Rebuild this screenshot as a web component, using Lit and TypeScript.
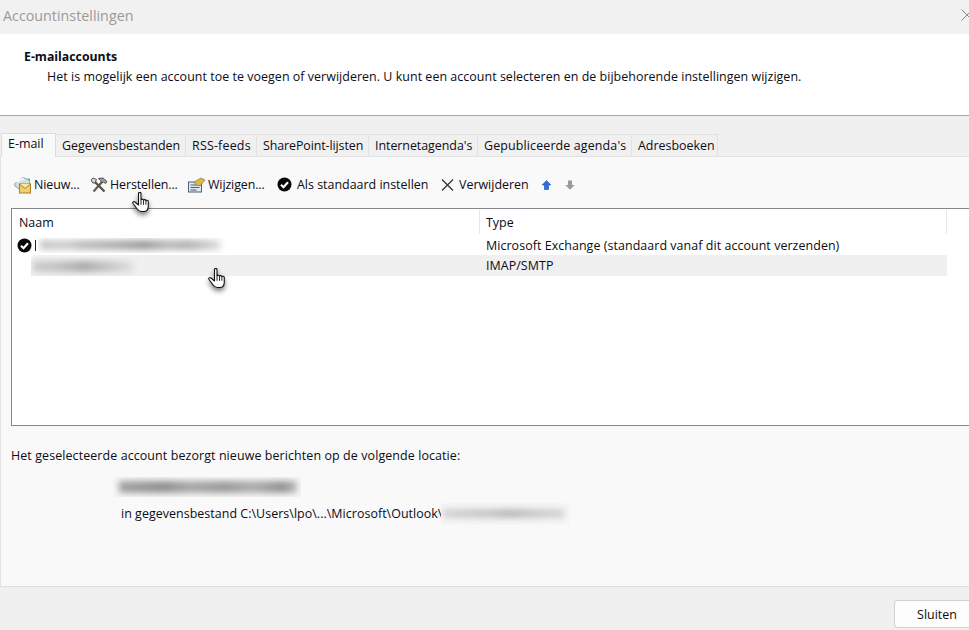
import { LitElement, html, css, svg } from "lit";
import { customElement } from "lit/decorators.js";

const check = html`<svg class="ic" width="15" height="15" viewBox="0 0 15 15"><circle cx="7.5" cy="7.5" r="7" fill="#0a0a0a"/><path d="M4 7.700 6.500 10.200 11 5.300" fill="none" stroke="#fff" stroke-width="2.200"/></svg>`;

const hand = svg`<svg width="18" height="21" viewBox="0 0 18 21">
  <path d="M6.500 1.500c0-1.500 2.500-1.500 2.500 0V8c.3-1.200 2.400-1.100 2.500.3.3-1 2.300-.9 2.400.5.3-.9 2.300-.7 2.400.8V14c0 3.500-1.500 5.500-4.500 5.500H9.500c-2.300 0-3.300-1-4.300-2.500L1 11.500C.2 10.300 1.800 9 3 10l3.500 3z" fill="#fff" stroke="#111" stroke-width="1.100" stroke-linejoin="round"/>
  <path d="M9 8.300v4.500M11.500 8.500v4.300M13.900 9v3.800" stroke="#111" stroke-width=".9" fill="none"/></svg>`;

@customElement("app-root")
export class AppRoot extends LitElement {
  static styles = css`
    :host { display: grid; grid-template-rows: 34px 82px 1fr 43px; width: 969px; height: 630px; overflow: hidden; position: relative;
      font: 12.45px/17px "Open Sans", "Noto Sans", sans-serif; color: #0c0c14; background: #f0f0f0; }
    .title { display: flex; align-items: center; justify-content: space-between; padding: 0 0 4px 3px; background: #f1f1f1; color: #9a9a9a; font-size: 14.3px; }
    .close { margin-right: -4px; display: block; }
    .head { background: #fff; border-bottom: 1px solid #a6a6a6; padding: 14px 0 0 24px; box-sizing: border-box; }
    .head b { display: block; font-weight: 700; font-size: 12.3px; }
    .head p { margin: 3px 0 0 23px; white-space: nowrap; letter-spacing: .04px; }
    .body { display: flex; flex-direction: column; padding-top: 16px; min-height: 0; }
    .tabs { display: flex; align-items: flex-end; height: 24px; padding-left: 1px; position: relative; z-index: 1; }
    .tab { height: 22px; box-sizing: border-box; padding: 2px 0 0 6px; background: #f0f0f0; border-top: 1px solid #e2e2e2; border-right: 1px solid #e2e2e2; white-space: nowrap; }
    .tab:nth-child(2) { width: 130px; }
    .tab:nth-child(3) { width: 71px; letter-spacing: .2px; }
    .tab:nth-child(4) { width: 112px; letter-spacing: -.1px; }
    .tab:nth-child(5) { width: 109px; letter-spacing: -.05px; }
    .tab:nth-child(6) { width: 154px; letter-spacing: .13px; }
    .tab:nth-child(7) { width: 86px; }
    .tab.on { height: 24px; width: 55px; padding: 1px 0 0 6px; background: #f9f9f9; border: 1px solid #dcdcdc; border-bottom: none; margin-bottom: -1px; }
    .panel { flex: 1; background: #f9f9f9; border: 1px solid #e2e2e2; border-right: none; border-bottom: 1px solid #dedede; display: flex; flex-direction: column; padding: 0 0 0 10px; min-height: 0; }
    .tools { display: grid; grid-template-columns: 76px 98px 89px 164px 100px auto; align-items: center; height: 51px; padding: 4px 0 0 3px; box-sizing: border-box; white-space: nowrap; }
    .tool { display: flex; align-items: center; gap: 2px; letter-spacing: -.12px; }
    .tool svg { flex: none; }
    .tool.wide { gap: 5px; letter-spacing: 0; }
    .arrows { display: flex; gap: 14px; margin-left: 1px; }
    .list { height: 218px; box-sizing: border-box; background: #fff; border: 1px solid #85878c; border-right: none; display: flex; flex-direction: column; margin-right: -1px; }
    .cols { display: grid; grid-template-columns: 468px 467px 1fr; height: 26px; align-items: center; }
    .cols span { padding-left: 6px; height: 24px; line-height: 26px; border-right: 1px solid #e6e6e6; box-sizing: border-box; }
    .cols span:first-child { padding-left: 7px; }
    .cols span:last-child { border: none; }
    .row { display: grid; grid-template-columns: 468px 467px; height: 20px; align-items: center; }
    .row.sel { height: 21px; background: linear-gradient(to right, transparent 21px, #f0f0f0 21px, #f0f0f0 935px, transparent 935px); }
    .row .name { display: flex; align-items: center; height: 100%; padding-left: 5px; }
    .row .type { padding-left: 6px; white-space: nowrap; letter-spacing: .06px; }
    .i-bar { width: 1px; height: 11px; background: #222; margin-left: 3px; flex: none; }
    /* redacted areas: a crisp plate holding a blurred band */
    .smudge { display: flex; align-items: center; flex: none; overflow: hidden; }
    .smudge::before { content: ""; display: block; flex: 1; margin: 0 5px 0 2px; filter: blur(3.200px); }
    .s1 { width: 188px; height: 15px; margin-left: 2px; background: #fff; }
    .s1::before { height: 10px; background: linear-gradient(90deg,#c6c6c6,#d0d0d0 14%,#bfbfbf 22%,#b0b0b0 42%,#9c9c9c 58%,#bababa 70%,#b2b2b2 82%,#cfcfcf 94%,#e4e4e4); }
    .s2 { width: 109px; height: 19px; margin: 2px 0 0 14px; background: #f0f0f0; }
    .s2::before { height: 11px; background: linear-gradient(90deg,#cacaca,#c2c2c2 25%,#aaaaaa 50%,#c2c2c2 70%,#d6d6d6 90%,#e8e8e8); }
    .wipe { margin-top: 21px; letter-spacing: .1px; }
    .acct { margin: 13px 0 0 110px; display: flex; flex-direction: column; gap: 8px; }
    .s3 { width: 188px; height: 20px; margin-left: -8px; background: #f6f6f6; }
    .s3::before { height: 12px; margin: 0 4px 0 6px; background: linear-gradient(90deg,#a3a3a3,#909090 25%,#a8a8a8 40%,#9a9a9a 60%,#aeaeae 75%,#929292 92%,#bcbcbc); }
    .file { display: flex; align-items: center; white-space: nowrap; height: 17px; letter-spacing: .04px; }
    .s4 { width: 129px; height: 22px; margin-left: -1px; background: #f6f6f6; position: relative; }
    .s4::before { height: 9px; margin: 0 6px 0 2px; background: linear-gradient(90deg,#d2d2d2,#c4c4c4 40%,#b8b8b8 55%,#cacaca 80%,#d4d4d4); }
    .foot { display: flex; justify-content: flex-end; align-items: flex-end; padding-bottom: 2px; }
    .btn { width: 85px; height: 28px; margin-right: -10px; box-sizing: border-box; border: 1px solid #d0d0d0; border-right: none; border-radius: 4px 0 0 4px; background: #fdfdfd; font: inherit; color: inherit; padding: 0; }
    .hand { position: absolute; filter: drop-shadow(0 3px 2.500px rgba(0,0,0,.5)); line-height: 0; }
    .h1 { left: 132px; top: 192px; }
    .h2 { left: 208px; top: 268px; }
  `;

  render() {
    return html`
      <div class="title"><span>Accountinstellingen</span>
        <svg class="close" width="12" height="12" viewBox="0 0 12 12"><path d="M.5.500 11.500 11.500M.5 11.500 11.500.500" stroke="#8a8a8a" fill="none"/></svg>
      </div>
      <div class="head"><b>E-mailaccounts</b>
        <p>Het is mogelijk een account toe te voegen of verwijderen. U kunt een account selecteren en de bijbehorende instellingen wijzigen.</p>
      </div>
      <div class="body">
        <div class="tabs">
          <div class="tab on">E-mail</div><div class="tab">Gegevensbestanden</div><div class="tab">RSS-feeds</div><div class="tab">SharePoint-lijsten</div><div class="tab">Internetagenda's</div><div class="tab">Gepubliceerde agenda's</div><div class="tab">Adresboeken</div>
        </div>
        <div class="panel">
          <div class="tools">
            <div class="tool"><svg width="18" height="18" viewBox="0 0 18 18"><path d="M.8 7.500 9 1.500l6.500 2.500v5l-9 5-5.700-4z" fill="#d5dce2" stroke="#9aa5ad"/><path d="M2.500 6 10 2.500" stroke="#f2f5f7" stroke-width="2"/><rect x="5.500" y="8" width="11" height="9" fill="#f2cf6b" stroke="#a9802c"/><path d="M5.500 8 11 12.500 16.500 8" fill="#f9e7a8" stroke="#a9802c"/><rect x="14" y="2.500" width="2" height="2" fill="#4ac94a"/></svg><span>Nieuw...</span></div>
            <div class="tool"><svg width="18" height="16" viewBox="0 0 18 16"><path d="M3.500 14.500 12.500 4.500" stroke="#6b5a3e" stroke-width="2.200"/><path d="M8.500 1.500 13 1l4 3.500-1.500 2-2-1.500-2 .5-1-2z" fill="#9aa2a8" stroke="#333" stroke-width=".8"/><path d="M14.500 14.500 5 5" stroke="#555" stroke-width="2.400"/><path d="M1 3 3 1l3.500 1.500L5 6 2.800 6z" fill="#cfd5da" stroke="#333" stroke-width=".8"/></svg><span>Herstellen...</span></div>
            <div class="tool"><svg width="18" height="16" viewBox="0 0 18 16"><rect x=".5" y="5" width="13" height="10" fill="#dfeaf5" stroke="#47617c"/><path d="M2.500 8h9M2.500 10.500h9M2.500 13h6" stroke="#47617c"/><path d="M6 5 13 1l4 2-5 6-4-1z" fill="#d8b84f" stroke="#8f7a2c" stroke-width=".7"/></svg><span>Wijzigen...</span></div>
            <div class="tool wide">${check}<span>Als standaard instellen</span></div>
            <div class="tool wide"><svg width="13" height="14" viewBox="0 0 13 14"><path d="M1 1.500 12 12.500M1 12.500 12 1.500" stroke="#333" stroke-width="1.300" fill="none"/></svg><span>Verwijderen</span></div>
            <div class="arrows">
              <svg width="9" height="10" viewBox="0 0 9 10"><path d="M4.500.5 8.800 5H6.500v4.500h-4V5H.2z" fill="#2f6fe0" stroke="#1d4fae" stroke-width=".6"/></svg>
              <svg width="10" height="10" viewBox="0 0 10 10"><path d="M3 .5h4V5h2.700L5 9.700.3 5H3z" fill="#9a9a9a"/></svg>
            </div>
          </div>
          <div class="list">
            <div class="cols"><span>Naam</span><span>Type</span><span></span></div>
            <div class="row"><div class="name">${check}<i class="i-bar"></i><i class="smudge s1"></i></div><div class="type">Microsoft Exchange (standaard vanaf dit account verzenden)</div></div>
            <div class="row sel"><div class="name"><i class="smudge s2"></i></div><div class="type">IMAP/SMTP</div></div>
          </div>
          <div class="wipe">Het geselecteerde account bezorgt nieuwe berichten op de volgende locatie:</div>
          <div class="acct"><i class="smudge s3"></i>
            <div class="file"><span>in gegevensbestand C:\\Users\\lpo\\...\\Microsoft\\Outlook\\</span><i class="smudge s4"></i></div>
          </div>
        </div>
      </div>
      <div class="foot"><button class="btn">Sluiten</button></div>
      <div class="hand h1">${hand}</div>
      <div class="hand h2">${hand}</div>
    `;
  }
}
